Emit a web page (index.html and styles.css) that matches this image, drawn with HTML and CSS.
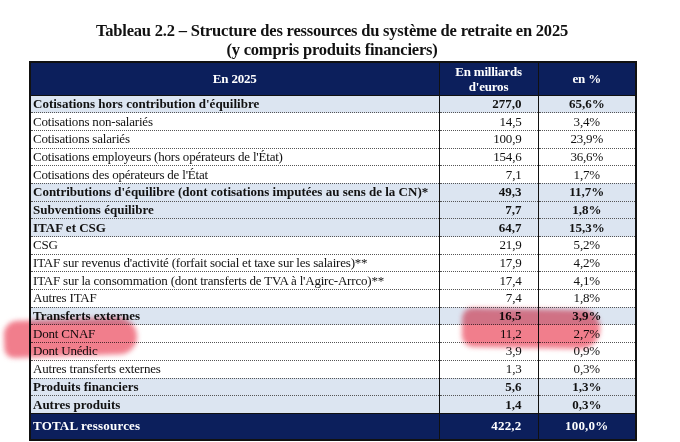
FILE: index.html
```html
<!DOCTYPE html>
<html lang="fr">
<head>
<meta charset="utf-8">
<title>Tableau 2.2</title>
<link rel="stylesheet" href="styles.css">
</head>
<body>
<div class="page">
  <div class="title">
    <div>Tableau 2.2 – Structure des ressources du système de retraite en 2025</div>
    <div>(y compris produits financiers)</div>
  </div>
  <div class="table-wrap">
    <table class="res">
      <colgroup>
        <col class="c-label"><col class="c-num"><col class="c-pct">
      </colgroup>
      <thead>
        <tr class="head">
          <th>En 2025</th>
          <th>En milliards<br>d'euros</th>
          <th>en %</th>
        </tr>
      </thead>
      <tbody>
        <tr class="sub"><td>Cotisations hors contribution d'équilibre</td><td>277,0</td><td>65,6%</td></tr>
        <tr><td>Cotisations non-salariés</td><td>14,5</td><td>3,4%</td></tr>
        <tr><td>Cotisations salariés</td><td>100,9</td><td>23,9%</td></tr>
        <tr><td>Cotisations employeurs (hors opérateurs de l'État)</td><td>154,6</td><td>36,6%</td></tr>
        <tr><td>Cotisations des opérateurs de l'État</td><td>7,1</td><td>1,7%</td></tr>
        <tr class="sub"><td>Contributions d'équilibre (dont cotisations imputées au sens de la CN)*</td><td>49,3</td><td>11,7%</td></tr>
        <tr class="sub"><td>Subventions équilibre</td><td>7,7</td><td>1,8%</td></tr>
        <tr class="sub"><td>ITAF et CSG</td><td>64,7</td><td>15,3%</td></tr>
        <tr><td>CSG</td><td>21,9</td><td>5,2%</td></tr>
        <tr><td>ITAF sur revenus d'activité (forfait social et taxe sur les salaires)**</td><td>17,9</td><td>4,2%</td></tr>
        <tr><td>ITAF sur la consommation (dont transferts de TVA à l'Agirc-Arrco)**</td><td>17,4</td><td>4,1%</td></tr>
        <tr><td>Autres ITAF</td><td>7,4</td><td>1,8%</td></tr>
        <tr class="sub"><td>Transferts externes</td><td>16,5</td><td>3,9%</td></tr>
        <tr><td>Dont CNAF</td><td>11,2</td><td>2,7%</td></tr>
        <tr><td>Dont Unédic</td><td>3,9</td><td>0,9%</td></tr>
        <tr><td>Autres transferts externes</td><td>1,3</td><td>0,3%</td></tr>
        <tr class="sub"><td>Produits financiers</td><td>5,6</td><td>1,3%</td></tr>
        <tr class="sub"><td>Autres produits</td><td>1,4</td><td>0,3%</td></tr>
        <tr class="total"><td>TOTAL ressources</td><td>422,2</td><td>100,0%</td></tr>
      </tbody>
    </table>
  </div>
  <div class="mark mark-left"></div>
  <div class="mark mark-right"></div>
</div>
</body>
</html>
```
FILE: styles.css
```css
html, body {
  margin: 0;
  padding: 0;
  background: #ffffff;
}
.page {
  position: relative;
  width: 680px;
  height: 442px;
  overflow: hidden;
  font-family: "Liberation Serif", "Times New Roman", serif;
  color: #111;
}
.title {
  width: 606px;
  margin-left: 29px;
  padding-top: 21px;
  text-align: center;
  font-weight: bold;
  font-size: 16.5px;
  line-height: 19px;
  letter-spacing: -0.2px;
  color: #111;
}
.table-wrap {
  margin-left: 29px;
  margin-top: 2px;
  width: 606px;
}
.res {
  width: 606px;
  border-collapse: collapse;
  table-layout: fixed;
  border: 2px solid #111;
  font-size: 13px;
  letter-spacing: -0.2px;
}
.c-label { width: 409px; }
.c-num { width: 99px; }
.c-pct { width: 98px; }
.res th, .res td {
  padding: 0;
  border-left: 1px solid #111;
  border-right: 1px solid #111;
  white-space: nowrap;
}
.head th {
  background: #0c1f5c;
  color: #fff;
  font-weight: bold;
  font-size: 13px;
  line-height: 15px;
  height: 31.5px;
  text-align: center;
  border-bottom: 1px solid #111;
}
.res td {
  height: 16.7px;
  line-height: 16px;
  border-bottom: 1px dotted #555;
}
.res td:first-child {
  padding-left: 2px;
  text-align: left;
}
.res td:nth-child(2) {
  text-align: right;
  padding-right: 16px;
}
.res td:nth-child(3) {
  text-align: center;
}
.sub td {
  background: #dce5f1;
  font-weight: bold;
  letter-spacing: 0;
}
.total td {
  background: #0c1f5c;
  color: #fff;
  font-weight: bold;
  height: 25px;
  border-bottom: 0;
  border-top: 1px solid #111;
  letter-spacing: 0.2px;
}
.mark {
  position: absolute;
  background: #f07080;
  mix-blend-mode: multiply;
  filter: blur(2.5px);
  opacity: 0.9;
}
.mark-left {
  left: 4px;
  top: 319px;
  width: 133px;
  height: 37px;
  border-radius: 14px 20px 18px 10px;
  transform: rotate(-2deg);
}
.mark-right {
  left: 462px;
  top: 309px;
  width: 138px;
  height: 39px;
  border-radius: 10px 18px 20px 12px;
  transform: rotate(1deg);
}
```
